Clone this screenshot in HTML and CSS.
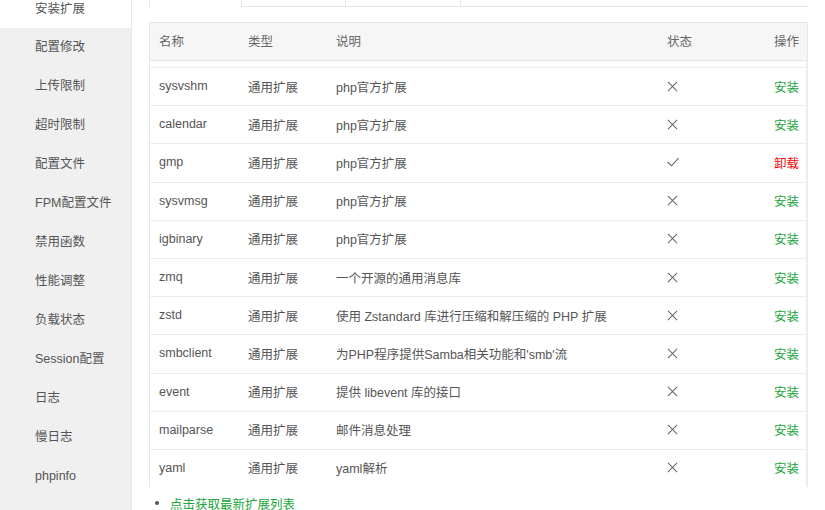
FILE: index.html
```html
<!DOCTYPE html>
<html lang="zh-CN">
<head>
  <meta charset="UTF-8">
  <title>PHP 设置 - 安装扩展</title>
  <link rel="stylesheet" href="styles.css">
</head>
<body>
  <div class="panel">
    <!-- left menu -->
    <ul class="side-menu">
      <li class="active">安装扩展</li>
      <li>配置修改</li>
      <li>上传限制</li>
      <li>超时限制</li>
      <li>配置文件</li>
      <li>FPM配置文件</li>
      <li>禁用函数</li>
      <li>性能调整</li>
      <li>负载状态</li>
      <li>Session配置</li>
      <li>日志</li>
      <li>慢日志</li>
      <li>phpinfo</li>
    </ul>

    <div class="content">
      <div class="tabs">
        <span class="tab tab-1 on"></span>
        <span class="tab tab-2"></span>
        <span class="tab tab-3"></span>
        <span class="tab-rest"></span>
      </div>

      <div class="ext-table">
        <div class="row head">
          <span>名称</span>
          <span>类型</span>
          <span>说明</span>
          <span>状态</span>
          <span class="op">操作</span>
        </div>
        <div class="body">
          <div class="row">
            <span>sysvshm</span><span>通用扩展</span><span>php官方扩展</span>
            <span><svg class="ico" viewBox="0 0 12 12"><path d="M1 1L11 11M11 1L1 11"/></svg></span>
            <span class="op"><a class="install">安装</a></span>
          </div>
          <div class="row">
            <span>calendar</span><span>通用扩展</span><span>php官方扩展</span>
            <span><svg class="ico" viewBox="0 0 12 12"><path d="M1 1L11 11M11 1L1 11"/></svg></span>
            <span class="op"><a class="install">安装</a></span>
          </div>
          <div class="row">
            <span>gmp</span><span>通用扩展</span><span>php官方扩展</span>
            <span><svg class="ico ok" viewBox="0 0 12 10"><path d="M0.5 5L4.5 8.8L11.5 1.2"/></svg></span>
            <span class="op"><a class="remove">卸载</a></span>
          </div>
          <div class="row">
            <span>sysvmsg</span><span>通用扩展</span><span>php官方扩展</span>
            <span><svg class="ico" viewBox="0 0 12 12"><path d="M1 1L11 11M11 1L1 11"/></svg></span>
            <span class="op"><a class="install">安装</a></span>
          </div>
          <div class="row">
            <span>igbinary</span><span>通用扩展</span><span>php官方扩展</span>
            <span><svg class="ico" viewBox="0 0 12 12"><path d="M1 1L11 11M11 1L1 11"/></svg></span>
            <span class="op"><a class="install">安装</a></span>
          </div>
          <div class="row">
            <span>zmq</span><span>通用扩展</span><span>一个开源的通用消息库</span>
            <span><svg class="ico" viewBox="0 0 12 12"><path d="M1 1L11 11M11 1L1 11"/></svg></span>
            <span class="op"><a class="install">安装</a></span>
          </div>
          <div class="row">
            <span>zstd</span><span>通用扩展</span><span>使用 Zstandard 库进行压缩和解压缩的 PHP 扩展</span>
            <span><svg class="ico" viewBox="0 0 12 12"><path d="M1 1L11 11M11 1L1 11"/></svg></span>
            <span class="op"><a class="install">安装</a></span>
          </div>
          <div class="row">
            <span>smbclient</span><span>通用扩展</span><span>为PHP程序提供Samba相关功能和'smb'流</span>
            <span><svg class="ico" viewBox="0 0 12 12"><path d="M1 1L11 11M11 1L1 11"/></svg></span>
            <span class="op"><a class="install">安装</a></span>
          </div>
          <div class="row">
            <span>event</span><span>通用扩展</span><span>提供 libevent 库的接口</span>
            <span><svg class="ico" viewBox="0 0 12 12"><path d="M1 1L11 11M11 1L1 11"/></svg></span>
            <span class="op"><a class="install">安装</a></span>
          </div>
          <div class="row">
            <span>mailparse</span><span>通用扩展</span><span>邮件消息处理</span>
            <span><svg class="ico" viewBox="0 0 12 12"><path d="M1 1L11 11M11 1L1 11"/></svg></span>
            <span class="op"><a class="install">安装</a></span>
          </div>
          <div class="row">
            <span>yaml</span><span>通用扩展</span><span>yaml解析</span>
            <span><svg class="ico" viewBox="0 0 12 12"><path d="M1 1L11 11M11 1L1 11"/></svg></span>
            <span class="op"><a class="install">安装</a></span>
          </div>
        </div>
      </div>

      <ul class="help">
        <li><a>点击获取最新扩展列表</a></li>
      </ul>
    </div>
  </div>
</body>
</html>
```

FILE: styles.css
```css
body {
  margin: 0;
  font-family: "Liberation Sans", "Noto Sans CJK SC", sans-serif;
  font-size: 12.5px;
  color: #555;
  background-color: #fff;
  overflow: hidden;
}
ul {
  margin: 0;
  padding: 0;
  list-style: none;
}
.panel {
  display: flex;
  height: 510px;
}
.side-menu {
  width: 131px;
  flex-shrink: 0;
  margin-top: -9px;
  background-color: #f0f0f0;
  border-right: 1px solid #e9e9e9;
}
.side-menu li {
  height: 39px;
  line-height: 39px;
  padding-left: 35px;
  color: #555;
}
.side-menu li.active {
  height: 37px;
  line-height: 37px;
  background-color: #fff;
}
.content {
  flex: 1;
  padding: 0 17px;
}
.tabs {
  display: flex;
  height: 7px;
}
.tab {
  box-sizing: border-box;
  border-left: 1px solid #e6e6ee;
  border-bottom: 1px solid #e6e6ee;
}
.tab.on {
  border-bottom: none;
}
.tab-1 { width: 92px; }
.tab-2 { width: 104px; }
.tab-3 { width: 115px; }
.tab-rest {
  flex: 1;
  box-sizing: border-box;
  height: 7px;
  border-left: 1px solid #e6e6ee;
  border-bottom: 1px solid #e6e6ee;
}
.ext-table {
  margin-top: 15px;
}
.row {
  display: grid;
  grid-template-columns: 89px 88px 331px 82px 1fr;
  align-items: center;
  box-sizing: border-box;
  height: 38.2px;
  border-top: 1px solid #ededf2;
}
.row span {
  padding: 0 9px;
  white-space: nowrap;
}
.row .op {
  text-align: right;
  padding-right: 7px;
}
.head {
  height: 39px;
  padding-bottom: 2px;
  background-color: #f6f6f6;
  border: 1px solid #e6e6e6;
  color: #666;
}
.head .op {
  padding-right: 8px;
}
.body {
  height: 426px;
  overflow: hidden;
  padding-top: 6px;
  box-sizing: border-box;
  border-left: 1px solid #e6e6e6;
  border-right: 2px solid #ececec;
}
.body .row {
  padding-bottom: 1px;
}
.ico {
  display: block;
  width: 11px;
  height: 11px;
  fill: none;
  stroke: #666;
  stroke-width: 1.1;
}
.ico.ok {
  width: 12px;
  height: 10px;
}
.install {
  color: #20a53a;
  cursor: pointer;
}
.remove {
  color: #ef0808;
  cursor: pointer;
}
.help {
  margin-top: 7px;
}
.help li {
  display: flex;
  align-items: center;
  height: 18px;
  padding-left: 6px;
}
.help li::before {
  content: "";
  width: 4px;
  height: 4px;
  border-radius: 50%;
  background-color: #555;
  margin-right: 11px;
}
.help a {
  color: #20a53a;
  cursor: pointer;
}
```
